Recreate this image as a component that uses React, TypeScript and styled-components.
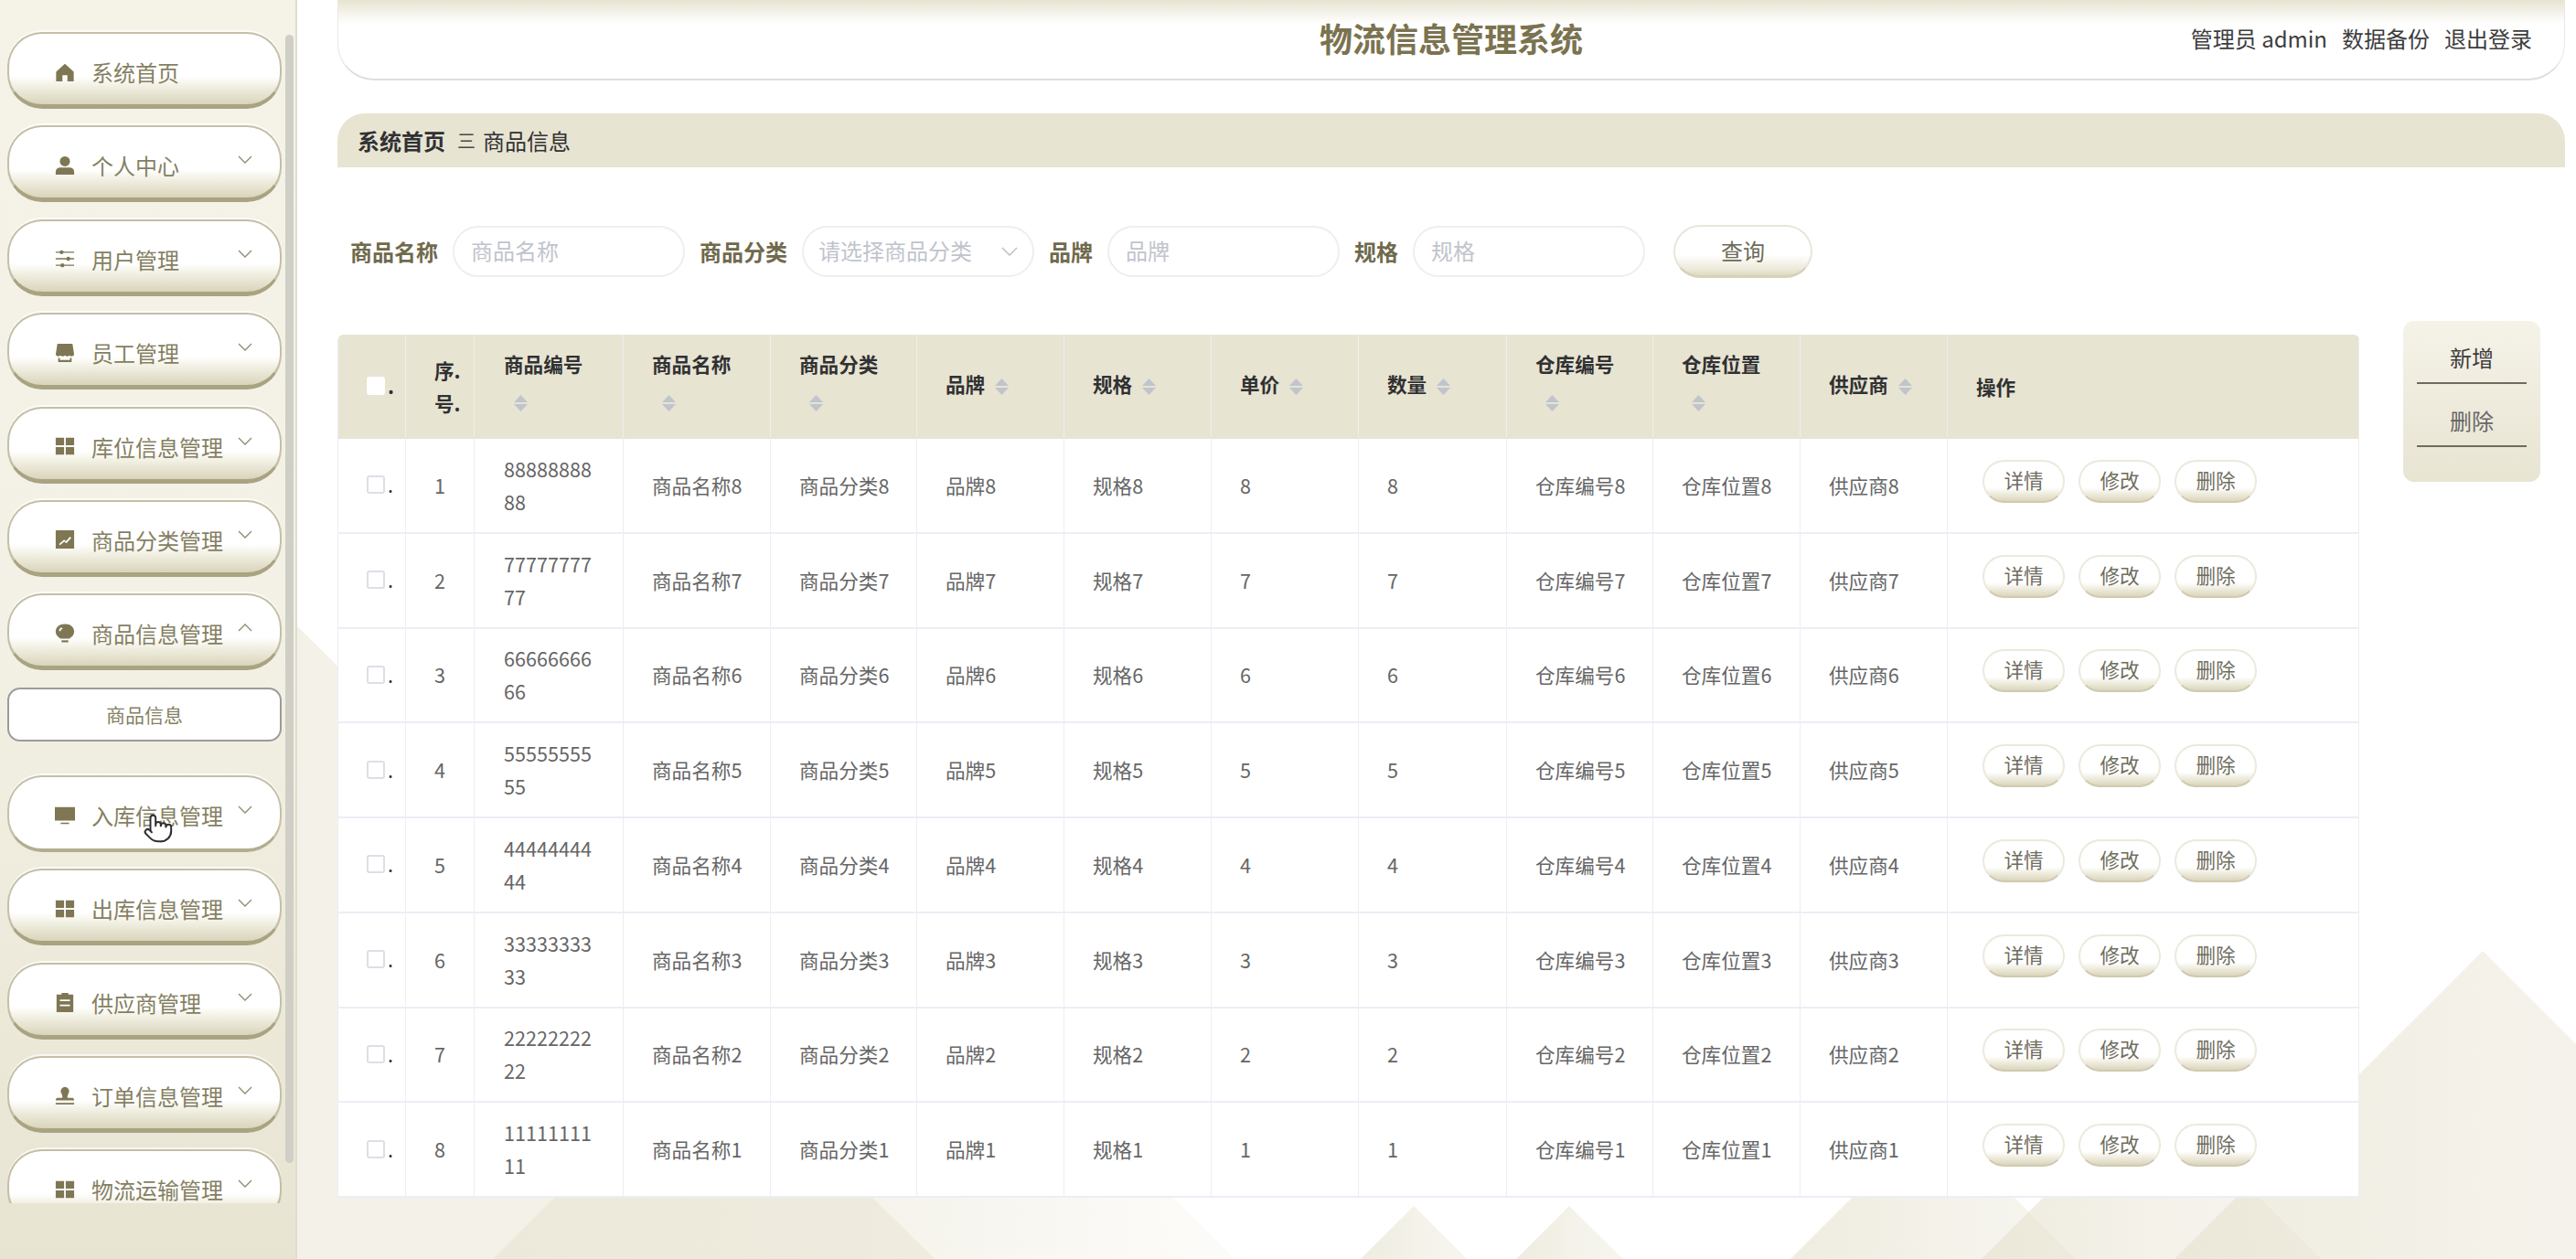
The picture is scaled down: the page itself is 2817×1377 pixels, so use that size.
import React from 'react';
import styled, { createGlobalStyle } from 'styled-components';
import { Pointer } from 'lucide-react';

const FONT = `"Noto Sans CJK SC", "Noto Sans", "Liberation Sans", sans-serif`;

const GlobalStyle = createGlobalStyle`
  html, body {
    margin: 0;
    padding: 0;
    background: #fff;
    overflow: hidden;
  }
  * {
    box-sizing: border-box;
  }
`;

const Page = styled.div`
  position: relative;
  display: flex;
  width: 2817px;
  height: 1377px;
  overflow: hidden;
  font-family: ${FONT};
  background: #fff;
`;

const Mountains = styled.svg`
  position: absolute;
  left: 0;
  top: 0;
  width: 2817px;
  height: 1377px;
`;

const Sidebar = styled.aside`
  position: relative;
  z-index: 1;
  display: flex;
  flex: none;
  width: 325px;
  height: 100%;
  background: linear-gradient(180deg, #f5f3e8 0%, #f3f1e5 50%, #e8e4d2 100%);
  border-right: 2px solid #dfddce;
`;

const MenuScroll = styled.nav`
  flex: none;
  width: 312px;
  height: 1316px;
  padding: 35px 4px 0 8px;
  overflow: hidden;
`;

const ScrollThumb = styled.div`
  flex: none;
  width: 9px;
  height: 1234px;
  margin-top: 38px;
  border-radius: 5px;
  background: #cfcfc6;
`;

const MenuItem = styled.div<{ $hover?: boolean }>`
  position: relative;
  display: flex;
  align-items: center;
  flex: none;
  width: 300px;
  height: 84px;
  margin-bottom: 18.4px;
  padding: 6px 0 0 50px;
  border: 2px solid #c4bfa6;
  border-bottom: ${({ $hover }) => ($hover ? '4px solid #b3ad90' : '5px solid #a9a382')};
  border-radius: 38px;
  color: #857f62;
  font-size: 24px;
  background: ${({ $hover }) =>
    $hover
      ? '#fff'
      : 'linear-gradient(180deg, #fff 0%, #fff 60%, #f0eee0 76%, #d9d4bb 100%)'};
  box-shadow: 0 -2px 0 rgba(255, 255, 255, 0.7);
`;

const MenuIcon = styled.svg`
  flex: none;
  width: 22px;
  height: 22px;
  margin-right: 18px;
  fill: #7f7654;
`;

const MenuChevron = styled.svg<{ $open?: boolean }>`
  position: absolute;
  right: 30px;
  top: 31px;
  width: 16px;
  height: 9px;
  fill: none;
  stroke: #8f8a70;
  stroke-width: 1.3;
  transform: ${({ $open }) => ($open ? 'rotate(180deg)' : 'none')};
`;

const SubItem = styled.div`
  display: flex;
  align-items: center;
  justify-content: center;
  width: 300px;
  height: 59px;
  margin: 0 0 37px;
  border: 2px solid #9c9b98;
  border-radius: 14px;
  background: #fff;
  color: #857f62;
  font-size: 21px;
`;

const HandCursor = styled(Pointer)`
  position: absolute;
  left: 146px;
  top: 36px;
  width: 34px;
  height: 40px;
  fill: #fff;
  stroke: #2f2f33;
  stroke-width: 1.4;
`;

const Main = styled.main`
  position: relative;
  z-index: 1;
  flex: none;
  width: 2436px;
  margin-left: 44px;
`;

const Header = styled.header`
  display: grid;
  grid-template-columns: 1fr auto 1fr;
  align-items: center;
  height: 88px;
  border: 1px solid #e9e8e2;
  border-top: none;
  border-bottom: 2px solid #deded9;
  border-radius: 0 0 40px 40px;
  background: linear-gradient(180deg, #e8e4d2 0, #fff 26px);
`;

const Title = styled.h1`
  grid-column: 2;
  margin: -4px 0 0;
  color: #7b7350;
  font-size: 36px;
  font-weight: 700;
  line-height: 88px;
`;

const UserBar = styled.div`
  grid-column: 3;
  display: flex;
  justify-content: flex-end;
  gap: 16px;
  margin-top: -3px;
  padding-right: 35px;
  color: #3d3d3d;
  font-size: 24px;
`;

const Breadcrumb = styled.div`
  display: flex;
  align-items: center;
  height: 59px;
  margin-top: 36px;
  padding-left: 22px;
  border-radius: 30px 30px 0 0;
  background: #e8e4d2;
  color: #303133;
  font-size: 24px;
`;

const CrumbHome = styled.span`
  font-weight: 700;
`;

const CrumbSep = styled.span`
  margin: 0 8px 0 13px;
  color: #4a4a44;
  font-size: 20px;
`;

const SearchRow = styled.form`
  display: flex;
  align-items: center;
  gap: 16px;
  height: 56px;
  margin-top: 64px;
  padding-left: 14px;
`;

const FieldLabel = styled.label`
  margin-top: -2px;
  color: #6f6a4c;
  font-size: 24px;
  font-weight: 700;
  white-space: nowrap;
`;

const TextInput = styled.input`
  width: 254px;
  height: 56px;
  padding: 0 18px 3px;
  border: 2px solid #eeeeee;
  border-radius: 28px;
  outline: none;
  background: #fff;
  font-family: ${FONT};
  font-size: 24px;
  &::placeholder {
    color: #c0c4cc;
    opacity: 1;
  }
`;

const SelectBox = styled.div`
  display: flex;
  align-items: center;
  justify-content: space-between;
  width: 254px;
  height: 56px;
  padding: 0 16px 3px 16px;
  border: 2px solid #eeeeee;
  border-radius: 28px;
  background: #fff;
  color: #c0c4cc;
  font-size: 24px;
`;

const SelectArrow = styled.svg`
  width: 18px;
  height: 10px;
  margin-top: 3px;
  fill: none;
  stroke: #b8bcc4;
  stroke-width: 1.4;
`;

const QueryButton = styled.button`
  width: 152px;
  height: 58px;
  margin-left: 15px;
  padding: 0 0 3px;
  border: 2px solid #e8e6da;
  border-bottom: 3px solid #d6d2ba;
  border-radius: 29px;
  background: linear-gradient(180deg, #fff 0%, #fff 58%, #ece9d9 88%, #dedac2 100%);
  color: #6c6a58;
  font-family: ${FONT};
  font-size: 24px;
`;

const ContentRow = styled.div`
  display: flex;
  align-items: flex-start;
  margin-top: 48px;
`;

const TableWrap = styled.div`
  flex: none;
  width: 2211px;
  margin-top: 15px;
  border-left: 1px solid #ebeef5;
  border-radius: 6px 6px 0 0;
  overflow: hidden;
  background: #fff;
`;

const DataTable = styled.table`
  width: 2210px;
  border-collapse: separate;
  border-spacing: 0;
  table-layout: fixed;
  background: #fff;
  color: #666;
  font-size: 21.6px;
`;

const HeadCell = styled.th<{ $pad?: number }>`
  height: 114px;
  padding: 0 ${({ $pad }) => $pad ?? 31}px;
  border-right: 1px solid #eeeeec;
  border-bottom: 1px solid #e8e4d2;
  background: #e8e4d2;
  color: #303133;
  font-size: 21.6px;
  font-weight: 700;
  line-height: 36px;
  text-align: left;
  vertical-align: middle;
`;

const BodyRow = styled.tr`
  height: 103.75px;
`;

const BodyCell = styled.td<{ $pad?: number; $wrap?: boolean }>`
  padding: 0 ${({ $pad }) => $pad ?? 31}px;
  border-right: 1px solid #edeef2;
  border-bottom: 2px solid #ebeef5;
  line-height: 36px;
  white-space: ${({ $wrap }) => ($wrap ? 'normal' : 'nowrap')};
  word-break: ${({ $wrap }) => ($wrap ? 'break-all' : 'normal')};
  vertical-align: middle;
`;

const CheckWrap = styled.span`
  display: inline-flex;
  align-items: center;
  color: #303133;
  line-height: 36px;
`;

const CheckBox = styled.span<{ $head?: boolean }>`
  display: inline-block;
  width: 20px;
  height: 20px;
  margin-right: 3px;
  border: ${({ $head }) => ($head ? 'none' : '2px solid #dcdfe6')};
  border-radius: 3px;
  background: #fff;
`;

const Caret = styled.svg`
  display: inline-block;
  width: 15px;
  height: 50px;
  margin-left: 11px;
  vertical-align: middle;
  fill: #c0c4cc;
`;

const RowActions = styled.div`
  display: flex;
  gap: 15px;
  margin-bottom: 9px;
`;

const RowButton = styled.button`
  width: 90px;
  height: 47px;
  padding: 0 0 4px;
  border: 2px solid #ece9dc;
  border-bottom: 2px solid #cfcab0;
  border-radius: 24px;
  background: linear-gradient(180deg, #fff 0%, #fff 66%, #ece9d9 84%, #dad6bd 100%);
  color: #6f6d5e;
  font-family: ${FONT};
  font-size: 21.6px;
`;

const SidePanel = styled.div`
  flex: none;
  width: 150px;
  height: 176px;
  margin-left: 48px;
  padding-top: 15px;
  border-radius: 12px;
  background: linear-gradient(180deg, #f5f3e8 0%, #e8e4d2 100%);
`;

const PanelButton = styled.div<{ $muted?: boolean }>`
  width: 120px;
  height: 54px;
  margin: 0 auto 15px;
  border-bottom: 2px solid #6e6d5c;
  color: ${({ $muted }) => ($muted ? '#666' : '#3d3d3d')};
  font-size: 24px;
  line-height: 50px;
  text-align: center;
`;

const HomeIcon = () => (
  <MenuIcon viewBox="0 0 24 24"><path d="M12 2 1.500 11.500V23H9v-7.500h6V23h7.500V11.500z" /></MenuIcon>
);
const UserIcon = () => (
  <MenuIcon viewBox="0 0 24 24"><circle cx="12" cy="7" r="6" /><path d="M1 23v-3.500C1 16 4 14.500 7 14.500h10c3 0 6 1.500 6 5V23z" /></MenuIcon>
);
const SlidersIcon = () => (
  <MenuIcon viewBox="0 0 24 24">
    <path d="M1 3.500h22v1.400H1zM1 11.300h22v1.400H1zM1 19.100h22v1.400H1z" />
    <circle cx="8" cy="4.200" r="2.400" /><circle cx="16" cy="12" r="2.400" /><circle cx="9" cy="19.800" r="2.400" />
  </MenuIcon>
);
const ShopIcon = () => (
  <MenuIcon viewBox="0 0 24 24">
    <path d="M3 1h18l2 13c-1 2.600-4 2.600-5.500 1-1.300 1.600-4 1.600-5.500 0-1.500 1.600-4.200 1.600-5.500 0C5 16.600 2 16.600 1 14z" />
    <path d="M4 18h2v2.500h12V18h2v5H4z" />
  </MenuIcon>
);
const GridIcon = () => (
  <MenuIcon viewBox="0 0 24 24"><path d="M1 2h10v9H1zM13 2h10v9H13zM1 13h10v9H1zM13 13h10v9H13z" /></MenuIcon>
);
const ChartIcon = () => (
  <MenuIcon viewBox="0 0 24 24">
    <path fillRule="evenodd" d="M1 1h22v22H1zM5 17.500l1.200 1.400 5-4.400 2.500 2L19.600 10 18 8.800l-4.700 5.400-2.300-2z" />
  </MenuIcon>
);
const BulbIcon = () => (
  <MenuIcon viewBox="0 0 24 24">
    <path fillRule="evenodd" d="M12 0.500c6.500 0 11 3.800 11 9 0 4.500-3.500 7-6 8.500H7C4.500 16.500 1 14 1 9.500 1 4.300 5.500 0.500 12 0.500zM7 5C5.500 6 5 7.500 5 9h2c0-1.500 1-2.500 2.500-3C9 5.300 8 4.500 7 5z" />
    <path d="M8 20h8v2.400H8z" />
  </MenuIcon>
);
const ScreenIcon = () => (
  <MenuIcon viewBox="0 0 24 24"><path d="M0 2h24v16H0zM7 20.500h10V22H7z" /></MenuIcon>
);
const OrderIcon = () => (
  <MenuIcon viewBox="0 0 24 24">
    <path fillRule="evenodd" d="M8 1h8v2h6v21H2V3h6zM6 9v2h12V9zM6 15v2h12v-2z" />
  </MenuIcon>
);
const StampIcon = () => (
  <MenuIcon viewBox="0 0 24 24">
    <path d="M12 2a5 5 0 0 1 4 8l-1 3v2h6c1 0 2 1 2 3H1c0-2 1-3 2-3h6v-2l-1-3a5 5 0 0 1 4-8zM1 21h22v2H1z" />
  </MenuIcon>
);

const Chevron = ({ open }: { open?: boolean }) => (
  <MenuChevron viewBox="0 0 16 9" $open={open}><path d="M1 1l7 7 7-7" /></MenuChevron>
);

const SortCaret = () => (
  <Caret viewBox="0 0 15 50"><path d="M7.500 16 15 24H0zM0 26h15l-7.500 8z" /></Caret>
);

const menuAbove = [
  { label: '系统首页', icon: <HomeIcon />, arrow: false },
  { label: '个人中心', icon: <UserIcon />, arrow: true },
  { label: '用户管理', icon: <SlidersIcon />, arrow: true },
  { label: '员工管理', icon: <ShopIcon />, arrow: true },
  { label: '库位信息管理', icon: <GridIcon />, arrow: true },
  { label: '商品分类管理', icon: <ChartIcon />, arrow: true },
];

const menuBelow = [
  { label: '出库信息管理', icon: <GridIcon /> },
  { label: '供应商管理', icon: <OrderIcon /> },
  { label: '订单信息管理', icon: <StampIcon /> },
  { label: '物流运输管理', icon: <GridIcon /> },
];

const columnWidths = [74, 75, 163, 161, 160, 161, 161, 161, 162, 160, 161, 161, 450];

const sortableHeads = ['商品编号', '商品名称', '商品分类', '品牌', '规格', '单价', '数量', '仓库编号', '仓库位置', '供应商'];

const rows = [8, 7, 6, 5, 4, 3, 2, 1];

export default function App() {
  return (
    <Page>
      <GlobalStyle />
      <Mountains viewBox="0 0 2817 1377">
        <defs>
          <linearGradient id="softA" x1="0" y1="0" x2="1" y2="0">
            <stop offset="0" stopColor="#e8e4d2" stopOpacity="0.7" />
            <stop offset="0.5" stopColor="#e8e4d2" stopOpacity="0.5" />
            <stop offset="1" stopColor="#e8e6d8" stopOpacity="0.4" />
          </linearGradient>
          <linearGradient id="softB" x1="0" y1="0" x2="1" y2="0">
            <stop offset="0" stopColor="#e8e4d2" stopOpacity="0.6" />
            <stop offset="0.5" stopColor="#e8e4d2" stopOpacity="0.45" />
            <stop offset="1" stopColor="#e8e4d2" stopOpacity="0.12" />
          </linearGradient>
        </defs>
        <polygon points="0,362 1022,1377 0,1377" fill="#e8e4d2" fillOpacity="0.5" />
        <polygon points="945,972 1350,1377 539,1377" fill="url(#softB)" />
        <polygon points="1546,1319 1604,1377 1488,1377" fill="url(#softA)" />
        <polygon points="1716,1319 1775,1377 1658,1377" fill="url(#softA)" />
        <polygon points="2114,1221 2270,1377 1958,1377" fill="url(#softA)" />
        <polygon points="2352,1192 2538,1377 2167,1377" fill="url(#softA)" />
        <polygon points="2715,1040 3052,1377 2378,1377" fill="url(#softA)" />
      </Mountains>

      <Sidebar>
        <MenuScroll>
          {menuAbove.map(m => (
            <MenuItem key={m.label}>
              {m.icon}
              {m.label}
              {m.arrow && <Chevron />}
            </MenuItem>
          ))}
          <MenuItem>
            <BulbIcon />
            商品信息管理
            <Chevron open />
          </MenuItem>
          <SubItem>商品信息</SubItem>
          <MenuItem $hover>
            <ScreenIcon />
            入库信息管理
            <Chevron />
            <HandCursor />
          </MenuItem>
          {menuBelow.map(m => (
            <MenuItem key={m.label}>
              {m.icon}
              {m.label}
              <Chevron />
            </MenuItem>
          ))}
        </MenuScroll>
        <ScrollThumb />
      </Sidebar>

      <Main>
        <Header>
          <Title>物流信息管理系统</Title>
          <UserBar>
            <span>管理员 admin</span>
            <span>数据备份</span>
            <span>退出登录</span>
          </UserBar>
        </Header>

        <Breadcrumb>
          <CrumbHome>系统首页</CrumbHome>
          <CrumbSep>三</CrumbSep>
          <span>商品信息</span>
        </Breadcrumb>

        <SearchRow>
          <FieldLabel>商品名称</FieldLabel>
          <TextInput placeholder="商品名称" readOnly />
          <FieldLabel>商品分类</FieldLabel>
          <SelectBox>
            <span>请选择商品分类</span>
            <SelectArrow viewBox="0 0 18 10"><path d="M1 1l8 8 8-8" /></SelectArrow>
          </SelectBox>
          <FieldLabel>品牌</FieldLabel>
          <TextInput placeholder="品牌" readOnly />
          <FieldLabel>规格</FieldLabel>
          <TextInput placeholder="规格" readOnly />
          <QueryButton type="button">查询</QueryButton>
        </SearchRow>

        <ContentRow>
          <TableWrap>
            <DataTable>
              <colgroup>
                {columnWidths.map((w, i) => (
                  <col key={i} width={w} />
                ))}
              </colgroup>
              <thead>
                <tr>
                  <HeadCell>
                    <CheckWrap>
                      <CheckBox $head />.
                    </CheckWrap>
                  </HeadCell>
                  <HeadCell>
                    序.
                    <br />
                    号.
                  </HeadCell>
                  {sortableHeads.map((h, i) => (
                    <HeadCell key={h} $pad={i === 0 ? 32 : 31}>
                      {h}
                      <SortCaret />
                    </HeadCell>
                  ))}
                  <HeadCell>操作</HeadCell>
                </tr>
              </thead>
              <tbody>
                {rows.map((n, i) => (
                  <BodyRow key={n}>
                    <BodyCell>
                      <CheckWrap>
                        <CheckBox />.
                      </CheckWrap>
                    </BodyCell>
                    <BodyCell>{i + 1}</BodyCell>
                    <BodyCell $wrap $pad={32}>{String(n).repeat(10)}</BodyCell>
                    <BodyCell>商品名称{n}</BodyCell>
                    <BodyCell>商品分类{n}</BodyCell>
                    <BodyCell>品牌{n}</BodyCell>
                    <BodyCell>规格{n}</BodyCell>
                    <BodyCell>{n}</BodyCell>
                    <BodyCell>{n}</BodyCell>
                    <BodyCell>仓库编号{n}</BodyCell>
                    <BodyCell>仓库位置{n}</BodyCell>
                    <BodyCell>供应商{n}</BodyCell>
                    <BodyCell $pad={38}>
                      <RowActions>
                        <RowButton type="button">详情</RowButton>
                        <RowButton type="button">修改</RowButton>
                        <RowButton type="button">删除</RowButton>
                      </RowActions>
                    </BodyCell>
                  </BodyRow>
                ))}
              </tbody>
            </DataTable>
          </TableWrap>
          <SidePanel>
            <PanelButton>新增</PanelButton>
            <PanelButton $muted>删除</PanelButton>
          </SidePanel>
        </ContentRow>
      </Main>
    </Page>
  );
}
